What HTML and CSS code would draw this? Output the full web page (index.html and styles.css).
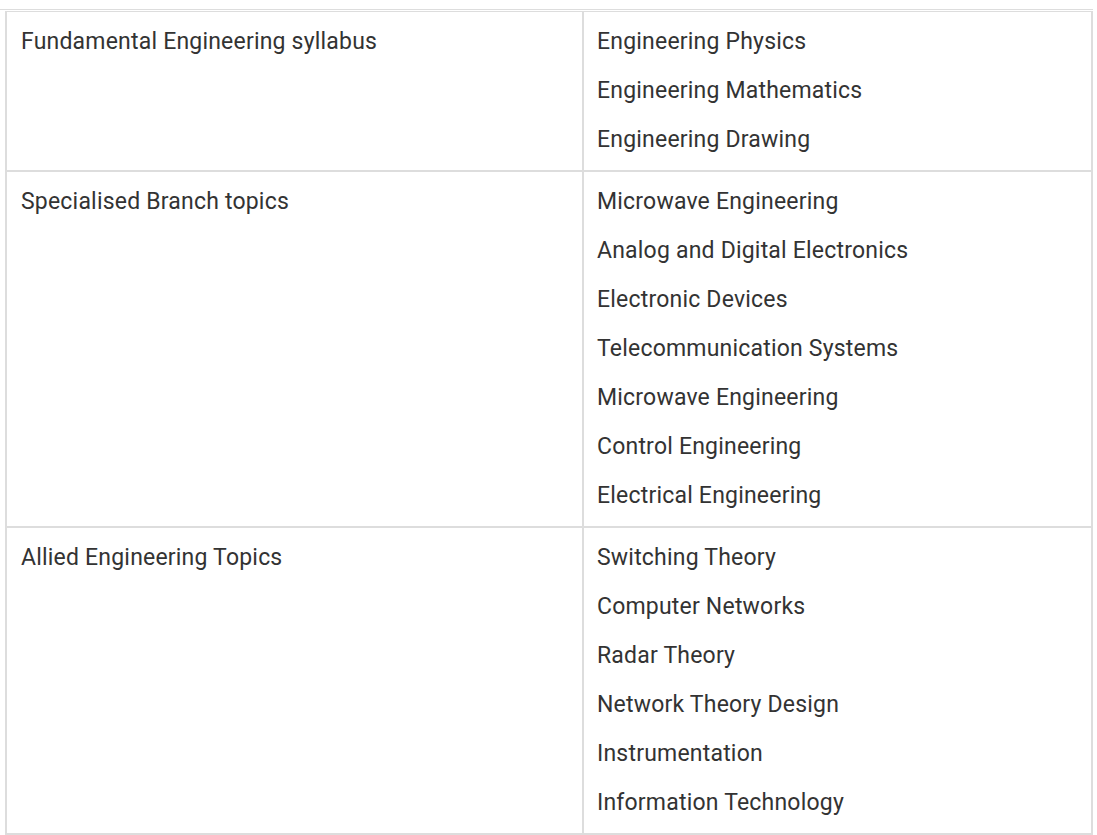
FILE: index.html
```html
<!DOCTYPE html>
<html lang="en">
<head>
<meta charset="utf-8">
<title>Syllabus</title>
<link rel="stylesheet" href="styles.css">
</head>
<body>
<div class="top-rule"></div>
<table class="syllabus">
  <tbody>
    <tr>
      <td class="topic"><div class="line">Fundamental Engineering syllabus</div></td>
      <td class="items">
        <div class="line">Engineering Physics</div>
        <div class="line">Engineering Mathematics</div>
        <div class="line">Engineering Drawing</div>
      </td>
    </tr>
    <tr>
      <td class="topic"><div class="line">Specialised Branch topics</div></td>
      <td class="items">
        <div class="line">Microwave Engineering</div>
        <div class="line">Analog and Digital Electronics</div>
        <div class="line">Electronic Devices</div>
        <div class="line">Telecommunication Systems</div>
        <div class="line">Microwave Engineering</div>
        <div class="line">Control Engineering</div>
        <div class="line">Electrical Engineering</div>
      </td>
    </tr>
    <tr>
      <td class="topic"><div class="line">Allied Engineering Topics</div></td>
      <td class="items">
        <div class="line">Switching Theory</div>
        <div class="line">Computer Networks</div>
        <div class="line">Radar Theory</div>
        <div class="line">Network Theory Design</div>
        <div class="line">Instrumentation</div>
        <div class="line">Information Technology</div>
      </td>
    </tr>
  </tbody>
</table>
</body>
</html>
```

FILE: styles.css
```css
html, body {
  margin: 0;
  padding: 0;
  background: #ffffff;
}

body {
  font-family: Roboto, "Liberation Sans", sans-serif;
  font-size: 23px;
  letter-spacing: 0.2px;
  color: #333333;
}

.top-rule {
  width: 1093px;
  height: 9px;
  border-bottom: 1px solid #dddddd;
  margin-bottom: 1px;
}

.syllabus {
  margin-left: 5px;
  width: 1088px;
  border-collapse: separate;
  border-spacing: 0;
  border-top: 1px solid #dddddd;
  border-left: 2px solid #dddddd;
  table-layout: fixed;
}

.syllabus td {
  vertical-align: top;
  border-right: 2px solid #dddddd;
  border-bottom: 2px solid #dddddd;
  padding: 5px 13px 6px 13px;
}

.syllabus td.topic {
  width: 548px;
  padding-left: 14px;
}

.line {
  line-height: 49px;
  white-space: nowrap;
}
```
